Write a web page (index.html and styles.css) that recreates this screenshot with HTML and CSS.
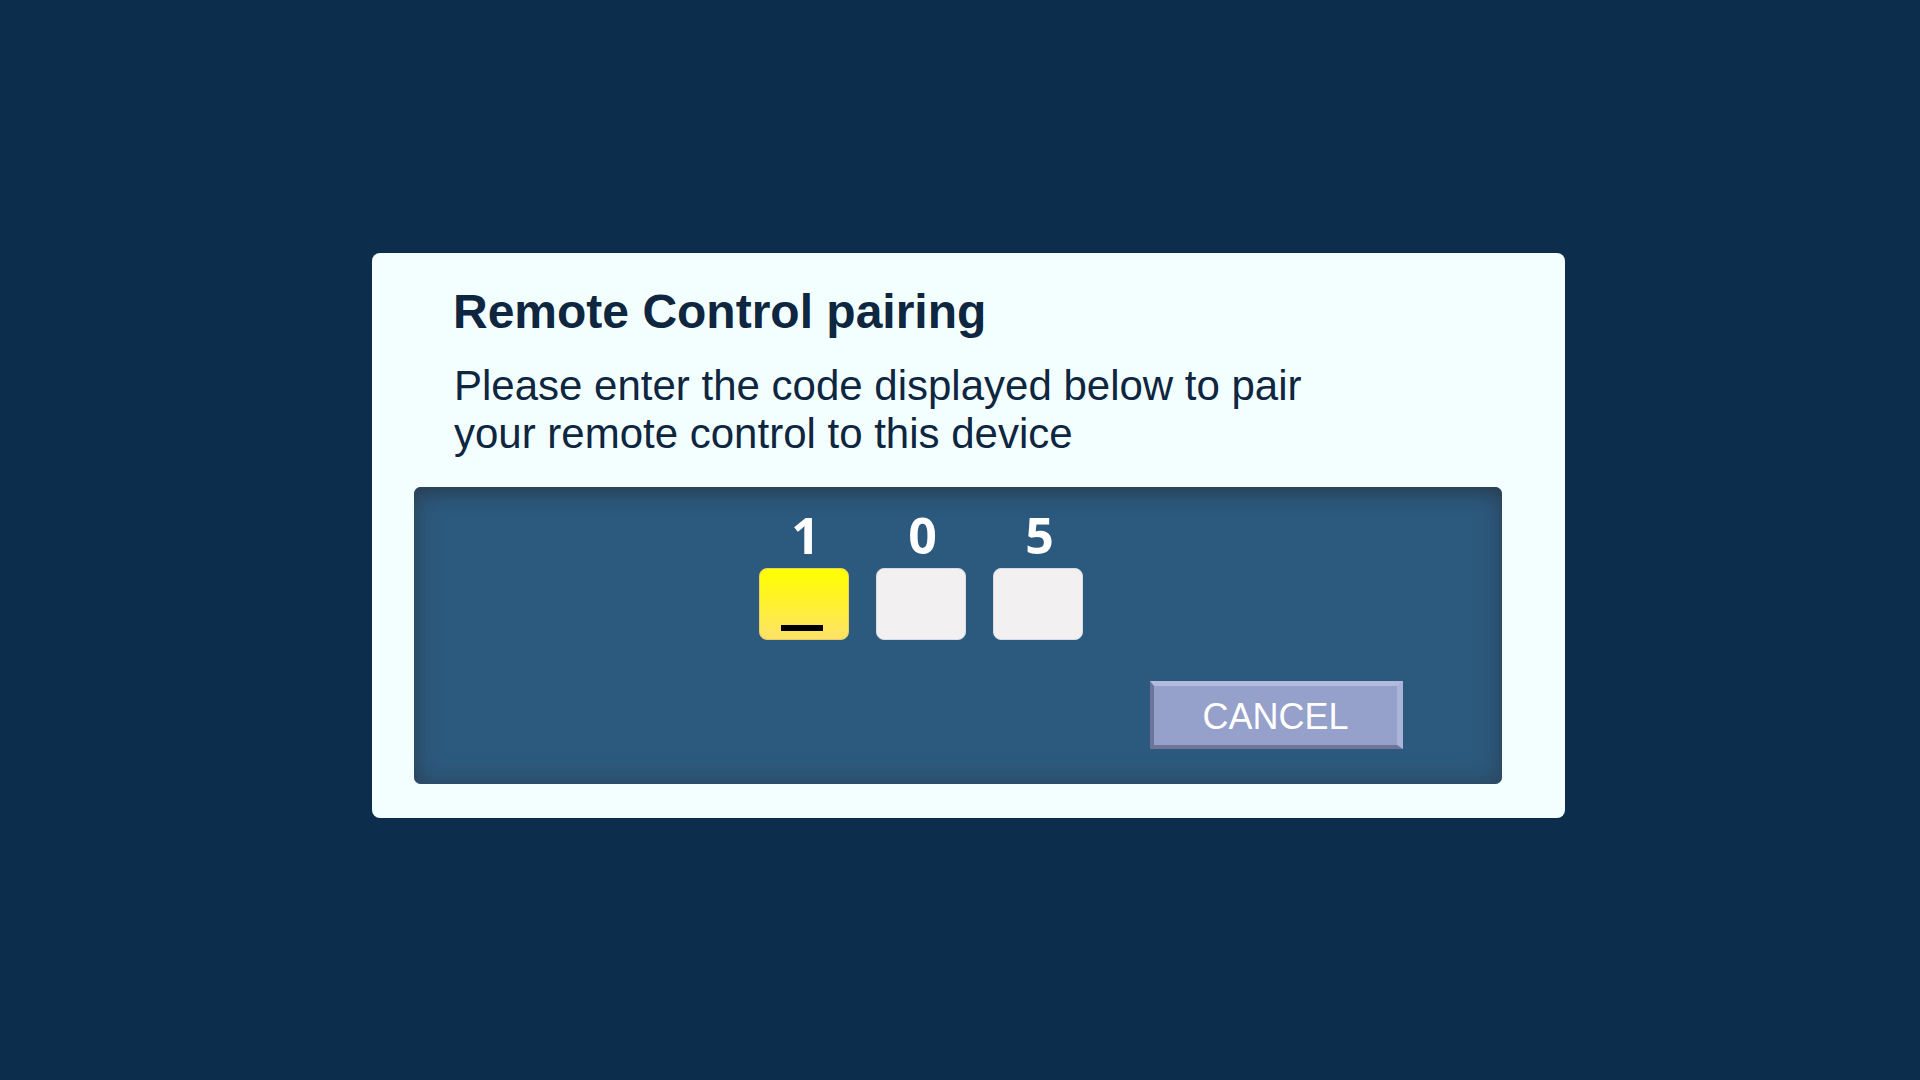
FILE: index.html
```html
<!DOCTYPE html>
<html lang="en">
<head>
<meta charset="utf-8">
<title>Remote Control pairing</title>
<link rel="stylesheet" href="styles.css">
</head>
<body>
  <div class="dialog">
    <h1 class="title">Remote Control pairing</h1>
    <p class="message">Please enter the code displayed below to pair<br>your remote control to this device</p>
    <div class="panel">
      <div class="code">
        <div class="digit">
          <span class="num">1</span>
          <div class="box active"><span class="cursor"></span></div>
        </div>
        <div class="digit">
          <span class="num">0</span>
          <div class="box"></div>
        </div>
        <div class="digit">
          <span class="num">5</span>
          <div class="box"></div>
        </div>
      </div>
      <div class="actions">
        <button class="cancel" type="button">CANCEL</button>
      </div>
    </div>
  </div>
</body>
</html>
```
FILE: styles.css
```css
html, body {
  margin: 0;
  padding: 0;
}

body {
  width: 1920px;
  height: 1080px;
  overflow: hidden;
  background: #0c2d4c;
  box-sizing: border-box;
  padding: 253px 0 0 372px;
  font-family: "Liberation Sans", Arial, sans-serif;
}

.dialog {
  width: 1193px;
  height: 565px;
  box-sizing: border-box;
  background: #f3ffff;
  border-radius: 8px;
  padding: 31px 0 0 42px;
}

.title {
  margin: 0;
  padding-left: 39px;
  font-size: 48px;
  line-height: 55px;
  font-weight: 700;
  color: #0e2640;
}

.message {
  margin: 23px 0 0;
  padding-left: 40px;
  font-size: 42px;
  line-height: 48px;
  font-weight: 400;
  color: #0e2640;
}

.panel {
  margin-top: 29px;
  width: 1088px;
  height: 297px;
  box-sizing: border-box;
  background: #2c5a7e;
  border-radius: 7px;
  box-shadow: inset 0 14px 18px -10px rgba(40, 62, 82, 0.9), inset 0 0 26px rgba(44, 66, 88, 0.95);
  padding: 23px 0 0;
  display: flex;
  flex-direction: column;
}

.code {
  display: flex;
  gap: 27px;
  padding-left: 345px;
}

.digit {
  display: flex;
  flex-direction: column;
  align-items: center;
  width: 90px;
}

.num {
  font-family: "Open Sans", "Noto Sans", sans-serif;
  font-weight: 700;
  font-size: 50px;
  line-height: 50px;
  color: #ffffff;
  padding-left: 3px;
}

.box {
  margin-top: 8px;
  width: 90px;
  height: 72px;
  box-sizing: border-box;
  border-radius: 8px;
  background: #f2f0f0;
  border: 1px solid #d8dde4;
  position: relative;
}

.box.active {
  background: linear-gradient(to bottom, #ffff00 0%, #fff22a 45%, #fde26a 100%);
  border-color: #e8d060;
}

.cursor {
  position: absolute;
  left: 21px;
  bottom: 8px;
  width: 42px;
  height: 6px;
  background: #000000;
}

.actions {
  display: flex;
  justify-content: flex-end;
  padding-right: 99px;
  margin-top: 41px;
}

.cancel {
  width: 253px;
  height: 68px;
  box-sizing: border-box;
  margin: 0;
  padding: 2px 0 0;
  background: #95a0cb;
  border-style: solid;
  border-width: 5px 6px 4px 4px;
  border-color: #b2bade #aab3d8 #6e7698 #6c7497;
  font-family: "Liberation Sans", Arial, sans-serif;
  font-size: 36px;
  line-height: 1;
  color: #ffffff;
  cursor: pointer;
}
```
